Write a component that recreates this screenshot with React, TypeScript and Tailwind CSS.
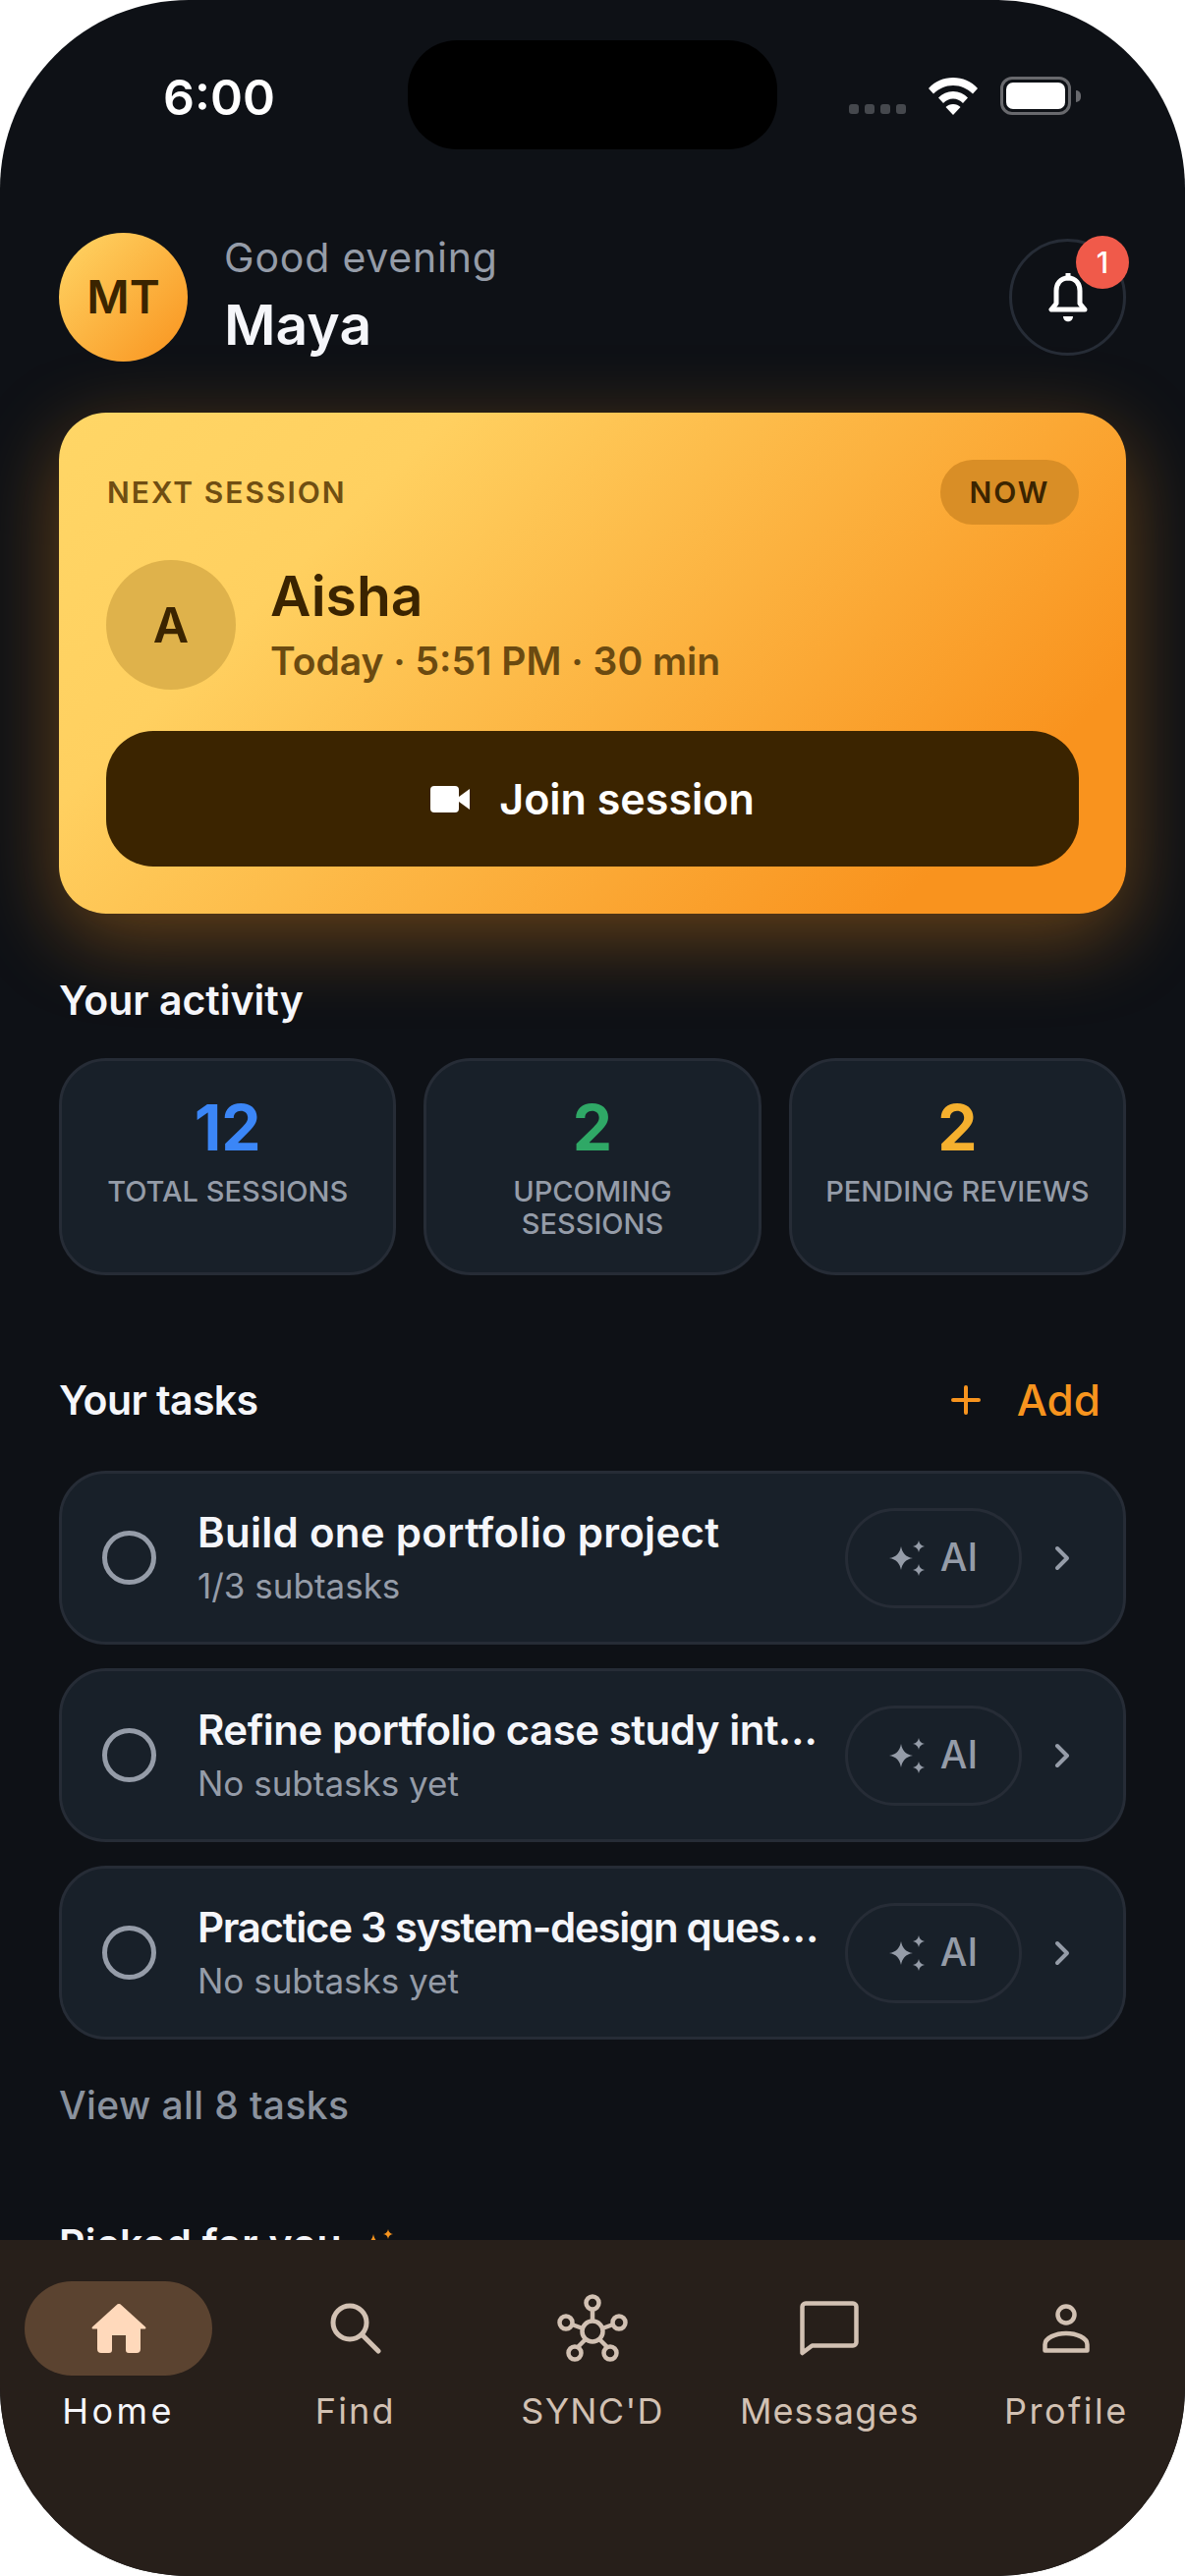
import type { ReactNode } from "react";

const stats = [
  { value: "12", label: "TOTAL SESSIONS", color: "text-[#3b86f7]" },
  { value: "2", label: "UPCOMING SESSIONS", color: "text-[#2fa866]" },
  { value: "2", label: "PENDING REVIEWS", color: "text-[#f5b02e]" },
];

const tasks = [
  { title: "Build one portfolio project", sub: "1/3 subtasks", tracking: "tracking-[0.3px]" },
  { title: "Refine portfolio case study into a talk", sub: "No subtasks yet", tracking: "tracking-[-0.5px]" },
  { title: "Practice 3 system-design questions", sub: "No subtasks yet", tracking: "tracking-[-1.3px]" },
];

function Sparkles({ className }: { className?: string }) {
  return (
    <svg viewBox="0 0 36 36" className={className} fill="currentColor">
      <path d="M12 6c1.200 6.500 4.500 10.800 12 12-7.500 1.200-10.800 5.500-12 12-1.200-6.500-4.500-10.800-12-12 7.500-1.200 10.800-5.500 12-12z" />
      <path d="M30 0c.6 3.400 2.400 5.400 6 6-3.600.6-5.400 2.600-6 6-.6-3.400-2.400-5.400-6-6 3.600-.6 5.400-2.600 6-6z" />
      <path d="M30 24c.6 3.400 2.400 5.400 6 6-3.600.6-5.400 2.600-6 6-.6-3.400-2.400-5.400-6-6 3.600-.6 5.400-2.600 6-6z" />
    </svg>
  );
}

function HomeIcon() {
  return (
    <svg viewBox="0 0 56 50" className="w-[56px] h-[50px]" fill="#ffd9bb">
      <path d="M25.500 1.200a3.600 3.600 0 0 1 5 0L55 23.500c.8.800.4 2-.8 2H50V46a4 4 0 0 1-4 4h-8a3 3 0 0 1-3-3V32H21v15a3 3 0 0 1-3 3h-8a4 4 0 0 1-4-4V25.500H1.800c-1.200 0-1.600-1.200-.8-2z" />
    </svg>
  );
}

function SearchIcon() {
  return (
    <svg viewBox="0 0 52 52" className="w-[52px] h-[52px]" fill="none" stroke="#d2c1b3" strokeWidth="5" strokeLinecap="round">
      <circle cx="20" cy="20" r="17" />
      <path d="M33 33l16 16" />
    </svg>
  );
}

function HubIcon() {
  return (
    <svg viewBox="0 0 72 70" className="w-[72px] h-[70px]" fill="none" stroke="#d2c1b3" strokeWidth="4.500">
      <circle cx="36" cy="38" r="10.500" />
      <circle cx="36" cy="9" r="6.500" />
      <circle cx="9" cy="29" r="6.500" />
      <circle cx="63" cy="29" r="6.500" />
      <circle cx="18" cy="60" r="6.500" />
      <circle cx="54" cy="60" r="6.500" />
      <path d="M36 16v12M15 31l11 4M57 31l-11 4M21 54l8-8M51 54l-8-8" />
    </svg>
  );
}

function ChatIcon() {
  return (
    <svg viewBox="0 0 60 56" className="w-[60px] h-[56px]" fill="none" stroke="#d2c1b3" strokeWidth="4.500" strokeLinejoin="round">
      <path d="M6 2.500h48a3.500 3.500 0 0 1 3.500 3.500v36a3.500 3.500 0 0 1-3.500 3.500H12.500L2.500 53V6A3.500 3.500 0 0 1 6 2.500z" />
    </svg>
  );
}

function PersonIcon() {
  return (
    <svg viewBox="0 0 48 50" className="w-[48px] h-[50px]" fill="none" stroke="#d2c1b3" strokeWidth="4.500" strokeLinejoin="round">
      <circle cx="24" cy="11" r="8.500" />
      <path d="M2.500 47.500v-6c0-7 11-11.500 21.500-11.500s21.500 4.500 21.500 11.500v6z" />
    </svg>
  );
}

function NavItem({ label, tracking, active, children }: { label: string; tracking: string; active?: boolean; children: ReactNode }) {
  return (
    <div className="flex-1 flex flex-col items-center">
      <div className={`w-[191px] h-[96px] rounded-full flex items-center justify-center ${active ? "bg-[#5b4330]" : ""}`}>
        {children}
      </div>
      <span className={`mt-[14px] text-[36px] leading-[44px] ${tracking} ${active ? "text-[#f5f6fa]" : "text-[#d2c1b3]"}`}>
        {label}
      </span>
    </div>
  );
}

export default function App() {
  return (
    <div className="w-[1206px] h-[2622px] bg-white font-['Inter',sans-serif]">
      <div className="relative w-full h-full bg-[#0e1116] rounded-[192px] overflow-hidden">
        {/* Status bar */}
        <div className="h-[237px] pl-[166px] pr-[167px] pt-[73px] flex justify-between items-start">
          <span className="text-[50px] leading-[52px] font-semibold text-white">6:00</span>
          <div className="flex items-center mr-[-61px] pt-[5px]">
            <div className="flex gap-[6px] mt-[27px]">
              <span className="w-[10px] h-[10px] rounded-[3px] bg-[#45484d]" />
              <span className="w-[10px] h-[10px] rounded-[3px] bg-[#45484d]" />
              <span className="w-[10px] h-[10px] rounded-[3px] bg-[#45484d]" />
              <span className="w-[10px] h-[10px] rounded-[3px] bg-[#45484d]" />
            </div>
            <svg viewBox="0 0 50 38" className="w-[50px] h-[38px] ml-[23px]" fill="white">
              <path d="M25 0c10 0 18 3.500 25 11l-5 5.500C39 11 33 8 25 8S11 11 5 16.500L0 11C7 3.500 15 0 25 0z" />
              <path d="M25 14c6 0 11 2.200 15 6.500L35 26c-3-3-6-4.500-10-4.500S18 23 15 26l-5-5.500C14 16.200 19 14 25 14z" />
              <path d="M25 27c3 0 5.500 1 7.500 3L25 38l-7.500-8c2-2 4.500-3 7.500-3z" />
            </svg>
            <div className="w-[72px] h-[39px] ml-[23px] rounded-[12px] border-[3px] border-[#68696d] p-[3px]">
              <div className="w-full h-full rounded-[7px] bg-white" />
            </div>
            <div className="w-[5px] h-[12px] ml-[5px] rounded-r-full bg-[#68696d]" />
          </div>
        </div>
        <div className="absolute left-[415px] top-[41px] w-[376px] h-[111px] rounded-[50px] bg-black" />

        <div className="px-[60px]">
          {/* Greeting */}
          <div className="flex items-center">
            <div className="w-[131px] h-[131px] rounded-full bg-[linear-gradient(135deg,#ffd666,#f9931e)] flex items-center justify-center text-[47px] font-semibold text-[#3b2400]">
              MT
            </div>
            <div className="ml-[37px] flex-1 pb-[4px]">
              <div className="text-[41px] leading-[50px] tracking-[0.8px] text-[#959ca8]">Good evening</div>
              <div className="mt-[11px] text-[57px] leading-[66px] font-semibold text-[#f5f6fa]">Maya</div>
            </div>
            <div className="relative w-[119px] h-[119px] rounded-full border-[3px] border-[#262c36] flex items-center justify-center">
              <svg viewBox="0 0 40 52" className="w-[40px] h-[52px] mt-[2px]" fill="none" stroke="white" strokeWidth="5" strokeLinejoin="round">
                <path d="M20 5c-8 0-12 6-12 13v13l-5 6h34l-5-6V18c0-7-4-13-12-13z" />
                <path d="M20 0v5" strokeLinecap="round" />
                <path d="M15 44c0 7 10 7 10 0z" fill="white" stroke="none" />
              </svg>
              <span className="absolute right-[-6px] top-[-6px] w-[54px] h-[54px] rounded-full bg-[#f05a4a] flex items-center justify-center text-[30px] font-medium text-white">
                1
              </span>
            </div>
          </div>

          {/* Next session card */}
          <div className="mt-[52px] h-[510px] rounded-[48px] p-[48px] bg-[linear-gradient(135deg,#ffd666_0%,#ffd060_25%,#f9931e_85%)] shadow-[0_24px_84px_rgba(249,146,30,0.38)]">
            <div className="flex items-center justify-between">
              <span className="ml-[1px] text-[30px] font-semibold tracking-[2px] text-[#6f4e12]">NEXT SESSION</span>
              <span className="w-[141px] h-[66px] rounded-full bg-[#d98e26] flex items-center justify-center text-[30px] font-semibold tracking-[2px] text-[#3b2400]">
                NOW
              </span>
            </div>
            <div className="mt-[36px] flex items-center">
              <div className="w-[132px] h-[132px] rounded-full bg-[#dfb24b] flex items-center justify-center text-[50px] font-semibold text-[#3b2400]">
                A
              </div>
              <div className="ml-[35px]">
                <div className="text-[57px] leading-[66px] font-semibold text-[#3b2400]">Aisha</div>
                <div className="mt-[8px] text-[39px] leading-[50px] font-semibold text-[#6b4a10]">
                  Today · 5:51 PM · 30 min
                </div>
              </div>
            </div>
            <div className="mt-[42px] h-[138px] rounded-[48px] bg-[#3b2400] flex items-center justify-center">
              <svg viewBox="0 0 40 27" className="w-[40px] h-[27px]" fill="white">
                <rect width="29" height="27" rx="4" />
                <path d="M29 11l11-8v21l-11-8z" />
              </svg>
              <span className="ml-[30px] text-[43px] font-semibold text-white">Join session</span>
            </div>
          </div>

          {/* Activity */}
          <h2 className="mt-[62px] text-[41px] leading-[52px] font-semibold text-[#f5f6fa]">Your activity</h2>
          <div className="mt-[33px] grid grid-cols-3 gap-[28px]">
            {stats.map((s) => (
              <div key={s.label} className="h-[221px] rounded-[48px] bg-[#182029] border-[3px] border-[#262c36] px-[24px] pt-[30px] text-center">
                <div className={`text-[64px] leading-[76px] font-bold ${s.color}`}>{s.value}</div>
                <div className="mt-[10px] text-[29px] leading-[33px] font-medium text-[#959ca8]">{s.label}</div>
              </div>
            ))}
          </div>

          {/* Tasks */}
          <div className="mt-[101px] flex items-center justify-between">
            <h2 className="text-[41px] leading-[52px] font-semibold tracking-[-0.6px] text-[#f5f6fa]">Your tasks</h2>
            <div className="flex items-center pr-[26px] text-[#f7941e]">
              <svg viewBox="0 0 30 30" className="w-[30px] h-[30px]" stroke="currentColor" strokeWidth="4" strokeLinecap="round">
                <path d="M15 2v26M2 15h26" />
              </svg>
              <span className="ml-[37px] text-[44px] leading-[52px] font-medium">Add</span>
            </div>
          </div>
          <div className="mt-[46px] flex flex-col gap-[24px]">
            {tasks.map((t) => (
              <div key={t.title} className="h-[177px] rounded-[48px] bg-[#182029] border-[3px] border-[#262c36] pl-[41px] pr-[54px] flex items-center">
                <div className="w-[55px] h-[55px] shrink-0 rounded-full border-[5px] border-[#959ca8]" />
                <div className="ml-[42px] pb-[2px] flex-1 min-w-0">
                  <div className={`truncate text-[42px] leading-[52px] font-semibold text-[#f5f6fa] ${t.tracking}`}>{t.title}</div>
                  <div className="mt-[6px] text-[35px] leading-[44px] text-[#959ca8]">{t.sub}</div>
                </div>
                <div className="ml-[24px] w-[180px] h-[102px] shrink-0 rounded-full border-[3px] border-[#262c36] flex items-center justify-center text-[#959ca8]">
                  <Sparkles className="w-[36px] h-[36px]" />
                  <span className="ml-[16px] text-[39px] font-medium">AI</span>
                </div>
                <svg viewBox="0 0 16 26" className="ml-[33px] w-[16px] h-[26px] shrink-0" fill="none" stroke="#959ca8" strokeWidth="4" strokeLinecap="round" strokeLinejoin="round">
                  <path d="M3 3l10 10-10 10" />
                </svg>
              </div>
            ))}
          </div>
          <div className="mt-[42px] text-[39px] leading-[50px] font-medium tracking-[0.4px] text-[#8a929e]">View all 8 tasks</div>
          <div className="mt-[90px] flex items-start">
            <h2 className="text-[41px] leading-[52px] font-semibold tracking-[0.3px] text-[#f5f6fa]">Picked for you</h2>
            <Sparkles className="ml-[22px] mt-[11px] w-[30px] h-[30px] text-[#f7941e]" />
          </div>
        </div>

        {/* Bottom nav */}
        <div className="absolute left-0 right-0 bottom-0 h-[342px] bg-[#271f1a] pt-[42px] flex">
          <NavItem label="Home" tracking="tracking-[3.4px]" active>
            <HomeIcon />
          </NavItem>
          <NavItem label="Find" tracking="tracking-[2.2px]">
            <SearchIcon />
          </NavItem>
          <NavItem label="SYNC'D" tracking="tracking-[1.3px]">
            <HubIcon />
          </NavItem>
          <NavItem label="Messages" tracking="tracking-[1.1px]">
            <ChatIcon />
          </NavItem>
          <NavItem label="Profile" tracking="tracking-[2.5px]">
            <PersonIcon />
          </NavItem>
        </div>
      </div>
    </div>
  );
}
